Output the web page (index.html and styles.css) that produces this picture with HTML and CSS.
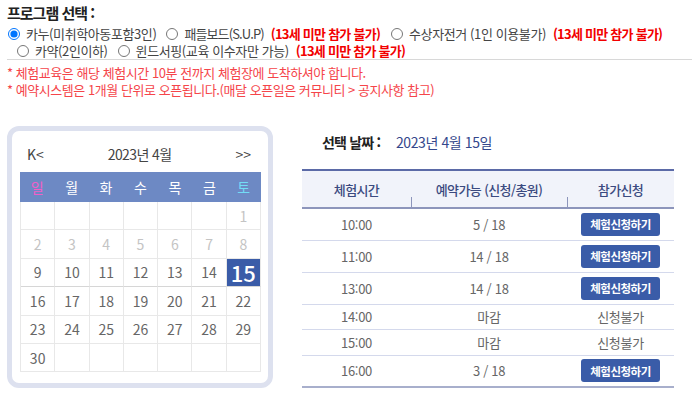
FILE: index.html
```html
<!DOCTYPE html>
<html lang="ko">
<head>
<meta charset="utf-8">
<link rel="stylesheet" href="styles.css">
</head>
<body>
<div class="page">
  <section class="program">
    <div class="prog-title">프로그램 선택 :</div>
    <div class="opt-line">
      <label class="opt"><input type="radio" name="p" checked><span>카누(미취학아동포함3인)</span></label>
      <label class="opt"><input type="radio" name="p"><span class="tight">패들보드(S.U.P)</span></label>
      <span class="warn">(13세 미만 참가 불가)</span>
      <label class="opt"><input type="radio" name="p"><span>수상자전거 (1인 이용불가)</span></label>
      <span class="warn">(13세 미만 참가 불가)</span>
    </div>
    <div class="opt-line second">
      <label class="opt"><input type="radio" name="p"><span>카약(2인이하)</span></label>
      <label class="opt"><input type="radio" name="p"><span>윈드서핑(교육 이수자만 가능)</span></label>
      <span class="warn">(13세 미만 참가 불가)</span>
    </div>
  </section>

  <ul class="notes">
    <li>* 체험교육은 해당 체험시간 10분 전까지 체험장에 도착하셔야 합니다.</li>
    <li>* 예약시스템은 1개월 단위로 오픈됩니다.(매달 오픈일은 커뮤니티 &gt; 공지사항 참고)</li>
  </ul>

  <div class="main">
    <div class="calendar">
      <div class="cal-nav">
        <span class="nav-btn">K&lt;</span>
        <span class="cal-title">2023년 4월</span>
        <span class="nav-btn">&gt;&gt;</span>
      </div>
      <div class="cal-head">
        <span class="sun">일</span><span>월</span><span>화</span><span>수</span><span>목</span><span>금</span><span class="sat">토</span>
      </div>
      <div class="cal-grid">
        <span></span><span></span><span></span><span></span><span></span><span></span><span class="past">1</span>
        <span class="past">2</span><span class="past">3</span><span class="past">4</span><span class="past">5</span><span class="past">6</span><span class="past">7</span><span class="past">8</span>
        <span class="wk">9</span><span class="wk">10</span><span class="wk">11</span><span class="wk">12</span><span class="wk">13</span><span class="wk">14</span><span class="wk sel">15</span>
        <span>16</span><span>17</span><span>18</span><span>19</span><span>20</span><span>21</span><span>22</span>
        <span>23</span><span>24</span><span>25</span><span>26</span><span>27</span><span>28</span><span>29</span>
        <span>30</span><span></span><span></span><span></span><span></span><span></span><span></span>
      </div>
    </div>

    <div class="slots">
      <div class="sel-date"><span class="sel-label">선택 날짜 :</span><span class="sel-value">2023년 4월 15일</span></div>
      <table class="slot-table">
        <thead>
          <tr><th>체험시간</th><th>예약가능 (신청/총원)</th><th>참가신청</th></tr>
        </thead>
        <tbody>
          <tr class="btn-row"><td>10:00</td><td>5 / 18</td><td><button class="apply">체험신청하기</button></td></tr>
          <tr class="btn-row"><td>11:00</td><td>14 / 18</td><td><button class="apply">체험신청하기</button></td></tr>
          <tr class="btn-row"><td>13:00</td><td>14 / 18</td><td><button class="apply">체험신청하기</button></td></tr>
          <tr class="txt-row"><td>14:00</td><td>마감</td><td>신청불가</td></tr>
          <tr class="txt-row"><td>15:00</td><td>마감</td><td>신청불가</td></tr>
          <tr class="btn-row"><td>16:00</td><td>3 / 18</td><td><button class="apply">체험신청하기</button></td></tr>
        </tbody>
      </table>
    </div>
  </div>
</div>
</body>
</html>
```

FILE: styles.css
```css
* { box-sizing: border-box; }
html, body { margin: 0; padding: 0; background: #fff; }
body {
  font-family: "Noto Sans CJK KR", "Noto Sans", sans-serif;
  color: #444;
  font-size: 13px;
}
.page { padding: 2px 8px 0 7px; width: 700px; }

.program { width: 685px; border-bottom: 1px solid #d8d8d8; padding-bottom: 1px; }
.prog-title {
  font-size: 15px; font-weight: bold; color: #222;
  line-height: 22px; letter-spacing: -1px;
}
.opt-line {
  display: flex; align-items: center; white-space: nowrap;
  line-height: 15px; height: 15px; letter-spacing: -0.4px; color: #444;
  margin-top: 2px;
}
.opt-line.second { padding-left: 9px; }
.opt { display: inline-flex; align-items: center; margin-right: 9px; }
.opt input {
  width: 12px; height: 12px; margin: 0 6px 0 1px;
}
.opt .tight { letter-spacing: -0.9px; }
.warn {
  color: #f20000; font-weight: bold; font-size: 13px; letter-spacing: -0.75px;
  margin-right: 10px; margin-left: -2px;
}

.notes {
  list-style: none; margin: 4px 0 0 0; padding: 0;
  color: #f5454a; font-size: 13px; line-height: 17px; letter-spacing: -0.45px;
}

.main { display: flex; align-items: flex-start; margin-top: 28px; }

.calendar {
  width: 266px; height: 262px;
  border: 5px solid #dde1ef; border-radius: 12px;
  padding: 0 7px 0 8px; flex: none;
}
.cal-nav {
  display: flex; justify-content: space-between; align-items: center;
  height: 41px; padding: 4px 10px 0 7px; color: #444; font-size: 14px;
}
.cal-title { letter-spacing: -0.6px; }
.cal-head {
  display: grid; grid-template-columns: repeat(7, 1fr);
  height: 30px; background: #6d89c4; align-items: center; text-align: center;
  color: #fff; font-size: 14px;
}
.cal-head .sun { color: #f25ec8; }
.cal-head .sat { color: #73dcf6; }
.cal-grid {
  display: grid; grid-template-columns: repeat(7, 1fr);
  grid-auto-rows: 28.4px;
  border-left: 1px solid #e8e8e8;
}
.cal-grid span {
  border-right: 1px solid #e8e8e8; border-bottom: 1px solid #e8e8e8;
  display: flex; align-items: center; justify-content: center;
  color: #666; font-size: 14px;
}
.cal-grid span.past { color: #c4c4c4; }
.cal-grid span.wk { border-bottom-color: #d6d6d6; }
.cal-grid span.sel {
  background: #3a5ca8; color: #fff; font-size: 22px; font-weight: 500;
}

.slots { margin-left: 29px; width: 372px; }
.sel-date {
  height: 43px; padding: 6px 0 0 20px; display: flex; align-items: flex-start;
  font-size: 14px; line-height: 20px;
}
.sel-label { font-weight: bold; color: #222; letter-spacing: -0.8px; width: 74px; }
.sel-value { color: #34478c; letter-spacing: -0.4px; }

.slot-table {
  width: 372px; border-collapse: collapse; table-layout: fixed;
  border-top: 2px solid #5b6aa7; border-bottom: 2px solid #a8afcc;
  font-size: 13px;
}
.slot-table th {
  background: #f1f3fa; color: #3b4a80; font-weight: 500; height: 38px;
  padding: 0; position: relative; letter-spacing: -0.6px;
  border-bottom: 2px solid #8d95bb;
}
.slot-table th:nth-child(1) { width: 109px; }
.slot-table th:nth-child(2) { width: 156px; }
.slot-table th:nth-child(3) { width: 107px; }
.slot-table th + th::before {
  content: ""; position: absolute; left: 0; bottom: 0;
  width: 1px; height: 10px; background: #8d95bb;
}
.slot-table td {
  text-align: center; color: #666; padding: 0;
  border-bottom: 1px solid #d4d9ec; letter-spacing: -0.3px;
}
.btn-row td { height: 32px; }
.txt-row td { height: 25.5px; }
.apply {
  width: 79px; height: 23px; border: none; border-radius: 3px;
  background: #3a5ca8; color: #fff; font-family: inherit;
  font-size: 11.5px; font-weight: bold; letter-spacing: -0.5px; padding: 0;
  cursor: pointer; vertical-align: middle;
}
```
